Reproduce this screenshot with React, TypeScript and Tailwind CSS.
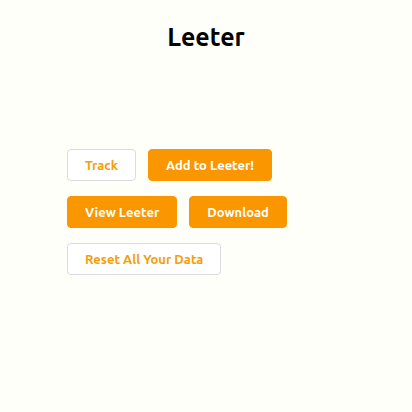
const base =
  "h-8 rounded border px-[17px] text-[13px] leading-5 font-bold whitespace-nowrap cursor-pointer";
const variants = {
  outline: "border-[#dbdbe0] bg-white text-[#f59e0b]",
  solid: "border-[#fa9600] bg-[#fa9600] text-white",
};

type ActionProps = { label: string; variant: keyof typeof variants };

function Action({ label, variant }: ActionProps) {
  return (
    <button type="button" className={`${base} ${variants[variant]}`}>
      {label}
    </button>
  );
}

export default function App() {
  return (
    <main className="min-h-screen bg-[#fffffa] pt-[17px] font-[Ubuntu,'Noto_Sans',sans-serif]">
      <h1 className="text-center text-[25px] leading-10 font-bold text-black">Leeter</h1>
      <div className="mx-auto mt-[92px] flex max-w-[278px] flex-wrap gap-x-3 gap-y-[15px]">
        <Action label="Track" variant="outline" />
        <Action label="Add to Leeter!" variant="solid" />
        <Action label="View Leeter" variant="solid" />
        <Action label="Download" variant="solid" />
        <Action label="Reset All Your Data" variant="outline" />
      </div>
    </main>
  );
}
